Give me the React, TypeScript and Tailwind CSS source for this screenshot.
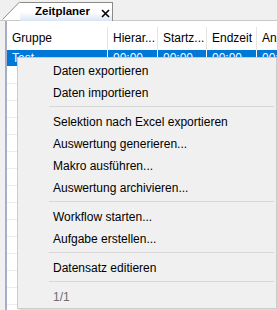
import React from 'react'

// ── Data ────────────────────────────────────────────────────────────────────

const COLUMNS = [
  { label: 'Gruppe', w: 'w-[100px]' },
  { label: 'Hierar...', w: 'w-[50px]' },
  { label: 'Startz...', w: 'w-[49px]' },
  { label: 'Endzeit', w: 'w-[50px]' },
  { label: 'Anzahl', w: 'w-[60px]' },
]

type MenuEntry = { label: string; disabled?: boolean } | 'sep'

const MENU: MenuEntry[] = [
  { label: 'Daten exportieren' },
  { label: 'Daten importieren' },
  'sep',
  { label: 'Selektion nach Excel exportieren' },
  { label: 'Auswertung generieren...' },
  { label: 'Makro ausführen...' },
  { label: 'Auswertung archivieren...' },
  'sep',
  { label: 'Workflow starten...' },
  { label: 'Aufgabe erstellen...' },
  'sep',
  { label: 'Datensatz editieren' },
  'sep',
  { label: '1/1', disabled: true },
]

const EMPTY_ROWS = Array.from({ length: 15 }, (_, i) => i)

// ── Component ───────────────────────────────────────────────────────────────

export default function App() {
  return (
    <div className="relative w-[277px] h-[310px] overflow-hidden bg-[#f0f0f0] font-['Liberation_Sans',Arial,sans-serif] text-[12px] text-black">

      {/* Tab strip */}
      <div className="flex items-end h-[21px] pl-[2px] border-b border-[#c9c9c9]">
        <svg width="18" height="19" viewBox="0 0 18 19" className="block shrink-0">
          <polygon points="0,19 18,0 18,19" fill="#ffffff" />
          <line x1="0.5" y1="18.5" x2="18" y2="0.5" stroke="#8a8a8a" strokeWidth="1" />
        </svg>
        <div className="flex items-center h-[19px] w-[93px] -mb-px border-t border-r border-[#8a8a8a] bg-gradient-to-b from-white from-50% to-[#d9e5f5]">
          <span className="ml-[15px] font-bold text-[11.5px] leading-none">Zeitplaner</span>
          <svg width="9" height="9" viewBox="0 0 9 9" className="ml-[11px] mt-[2px] shrink-0">
            <path d="M1 1 L8 8 M8 1 L1 8" stroke="#000" strokeWidth="1.6" />
          </svg>
        </div>
      </div>

      {/* Grid panel */}
      <div className="ml-[5px] h-[289px] overflow-hidden bg-white border-l-2 border-[#a7adc9]">

        {/* Header */}
        <div className="flex h-[29px] items-end">
          {COLUMNS.map((c, i) => (
            <div key={c.label}
              className={`${c.w} shrink-0 h-[23px] flex items-end pl-[5px] pb-[4px] leading-[15px] whitespace-nowrap ${i > 0 ? 'border-l border-[#e5e5e5]' : ''}`}>
              {c.label}
            </div>
          ))}
        </div>

        {/* Selected row */}
        <div className="flex h-[17px] bg-[#0078d7] text-white border-b border-white">
          {COLUMNS.map((c, i) => (
            <div key={c.label}
              className={`${c.w} shrink-0 pl-[5px] leading-[16px] ${i > 0 ? 'border-l border-white' : ''}`}>
              {i === 0 ? 'Test' : '00:00'}
            </div>
          ))}
        </div>

        {/* Empty rows */}
        {EMPTY_ROWS.map(r => (
          <div key={r} className="h-[17px] border-b border-[#ececec]" />
        ))}
      </div>

      {/* Context menu */}
      <div className="absolute left-[17px] top-[57px] w-[260px] bg-[#f0f0f0] border border-[#cccccc] p-px shadow-[2px_2px_2px_rgba(0,0,0,0.15)]">
        {MENU.map((m, i) =>
          m === 'sep' ? (
            <div key={i} className="h-[7px] flex items-center pl-[30px] pr-[1px]">
              <div className="h-px w-full bg-[#d7d7d7]" />
            </div>
          ) : (
            <div key={i}
              className={`h-[22px] flex items-center pl-[34px] pt-px whitespace-nowrap ${m.disabled ? 'text-[#6d6d6d]' : ''}`}>
              {m.label}
            </div>
          )
        )}
      </div>
    </div>
  )
}
